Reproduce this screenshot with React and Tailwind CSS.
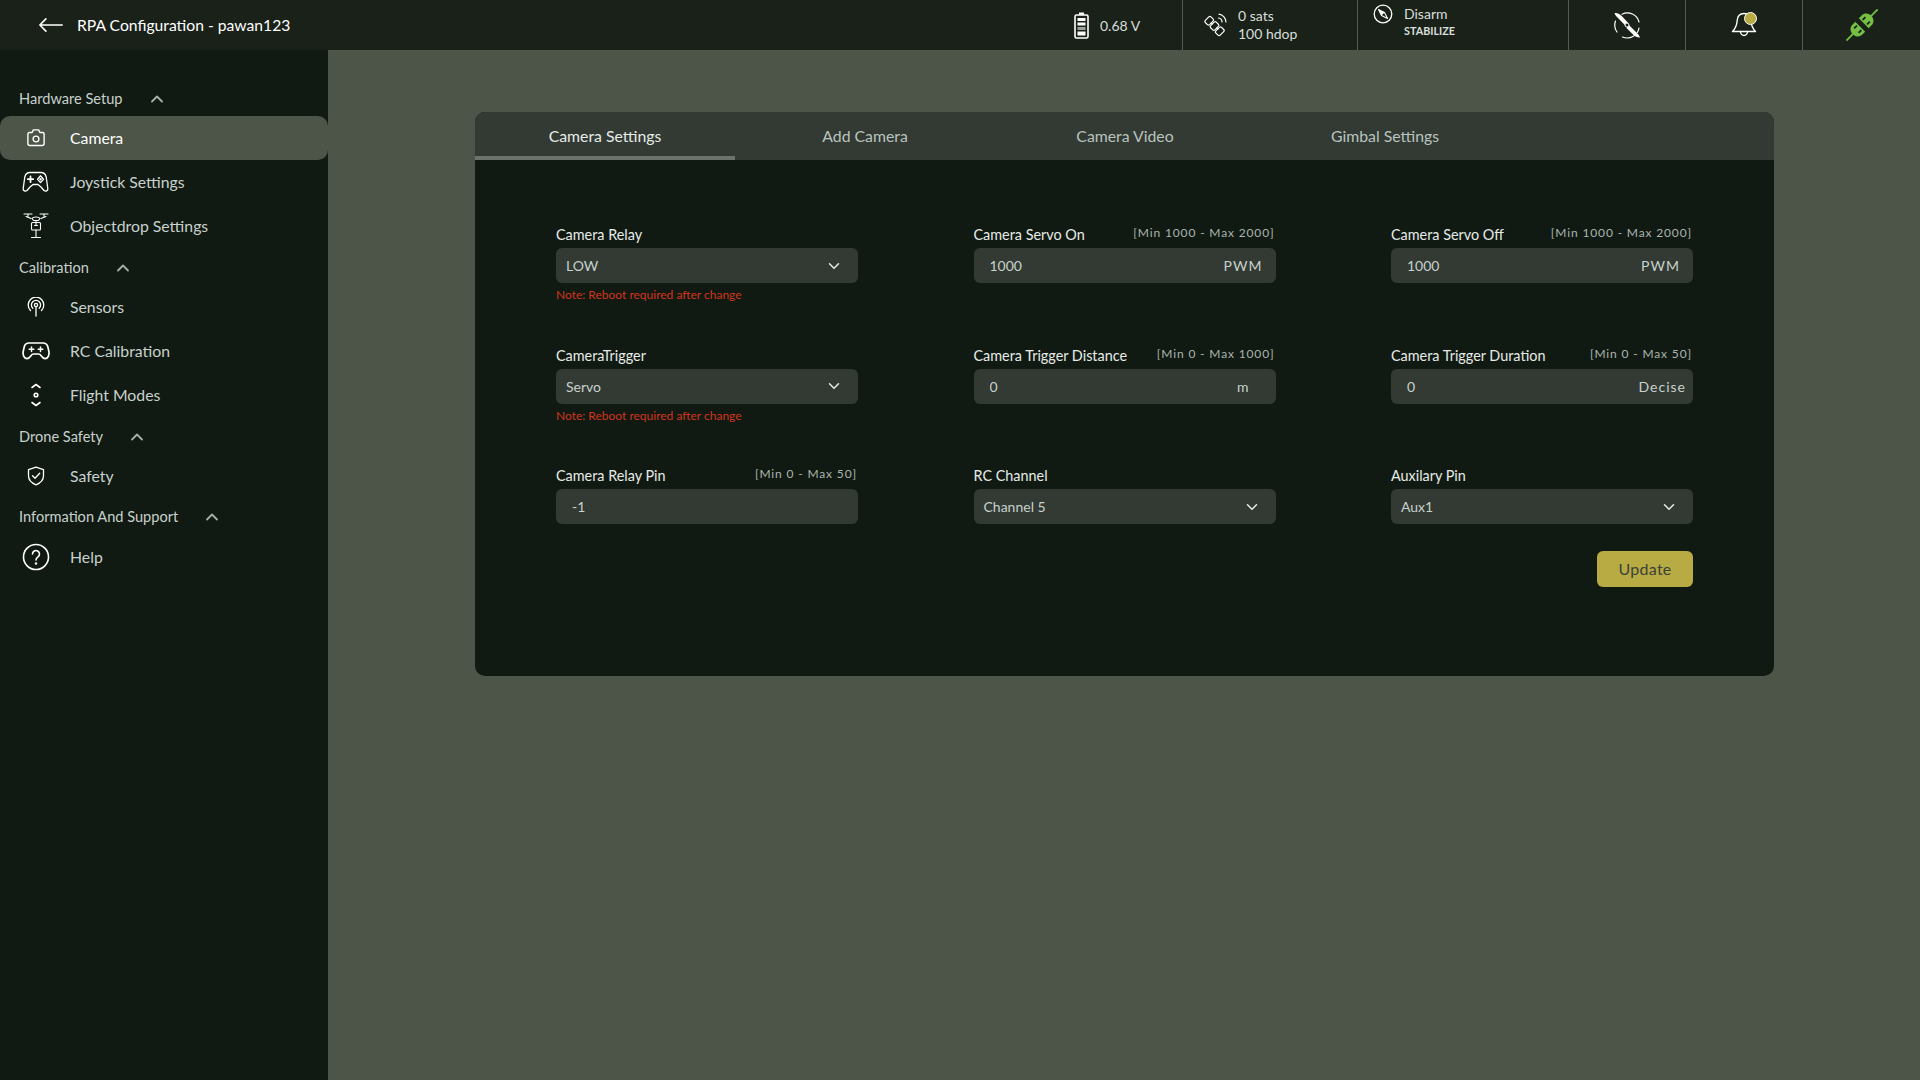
import { ChevronUp, ChevronDown } from 'lucide-react';

const Svg = ({ className, children, viewBox = '0 0 24 24', sw = 1.6 }) => (
   <svg viewBox={viewBox} fill="none" stroke="currentColor" strokeWidth={sw} strokeLinecap="round" strokeLinejoin="round" className={className}>
      {children}
   </svg>
);

const CameraIcon = () => (
   <Svg className="w-[20px] h-[20px] text-white" viewBox="0 0 20 20" sw={1.4}>
      <path d="M3.5 4.5h2.6l1.3-2.6h5.2l1.3 2.6h2.6a1.6 1.6 0 0 1 1.6 1.6v9.4a2 2 0 0 1-2 2H3.9a2 2 0 0 1-2-2V6.1a1.6 1.6 0 0 1 1.6-1.6z" />
      <circle cx="10" cy="11" r="2.9" />
   </Svg>
);

const JoystickIcon = () => (
   <Svg className="w-[27px] h-[22px] text-white" viewBox="0 0 27 22" sw={1.3}>
      <path d="M8 1.500h11c3 0 4.500 1.500 5.200 4.500l1.600 11.500c.3 2.500-2.200 3.300-3.800 2L19 16l-3-2.500H11L8 16l-3 3.500c-1.600 1.300-4.100.5-3.800-2L2.800 6C3.500 3 5 1.500 8 1.500z" />
      <path d="M8.500 5.500v5.500M5.800 8.200h5.400" strokeWidth="1.800" />
      <path d="M18.500 4.800l3 3.400-3 3.400-3-3.400z" strokeWidth="1.300" />
      <circle cx="18.500" cy="8.200" r=".6" />
   </Svg>
);

const DroneIcon = () => (
   <Svg className="w-[26px] h-[28px] text-white" viewBox="0 0 26 28" sw={1.1}>
      <path d="M1 2h8M17 2h8M5 2v2.500M21 2v2.500M3 4.500l5 2M23 4.500l-5 2" />
      <path d="M9 6.500c1-2 7-2 8 0l-1.500 2h-5z" />
      <rect x="8.500" y="10.500" width="9" height="7.500" rx="1" />
      <path d="M13 8.500v5M11.500 13.500h3M13 18v7M8.500 25.500h9" />
   </Svg>
);

const SensorIcon = () => (
   <Svg className="w-[20px] h-[20px] text-white" viewBox="0 0 20 20" sw={1.3}>
      <circle cx="10" cy="8" r="1.600" />
      <path d="M10 9.600V19M6.800 11.300a4.600 4.600 0 1 1 6.400 0M4.500 13.500a7.800 7.800 0 1 1 11 0" />
   </Svg>
);

const RcIcon = () => (
   <Svg className="w-[28px] h-[20px] text-white" viewBox="0 0 28 20" sw={1.7}>
      <path d="M7 2h14c2.600 0 4 1.300 4.800 3.600l1 4.400c.9 4-1 7.600-3.600 7.600-1.800 0-3-1.400-4.300-3.200-.6-.9-1.300-1.400-2.400-1.400h-4.900c-1.100 0-1.800.5-2.400 1.400-1.300 1.800-2.500 3.200-4.300 3.200-2.600 0-4.500-3.600-3.600-7.600l1-4.400C3 3.300 4.400 2 7 2z" />
      <path d="M9.500 6v4.500M7.200 8.200h4.600M18.500 6v4.500M16.200 8.200h4.600" strokeWidth="1.500" />
   </Svg>
);

const FlightIcon = () => (
   <Svg className="w-[14px] h-[24px] text-white" viewBox="0 0 14 24" sw={1.600}>
      <path d="M3 4.500L7 1.500l4 3M3 19.500l4 3 4-3" />
      <circle cx="7" cy="12" r="1.800" />
   </Svg>
);

const ShieldIcon = () => (
   <Svg className="w-[18px] h-[20px] text-white" viewBox="0 0 18 20" sw={1.300}>
      <path d="M9 1.200L16.500 3.600v6.200c0 4.400-3.300 7.400-7.500 9-4.200-1.600-7.500-4.600-7.500-9V3.600z" />
      <path d="M5.500 9.800l2.500 2.500 4.700-5" />
   </Svg>
);

const HelpIcon = () => (
   <Svg className="w-[28px] h-[28px] text-white" viewBox="0 0 28 28" sw={1.600}>
      <circle cx="14" cy="14" r="12.500" />
      <path d="M10.500 11a3.500 3.500 0 1 1 5.500 2.900c-1.300.9-2 1.600-2 3.100" />
      <circle cx="14" cy="20.500" r=".5" />
   </Svg>
);

const BatteryIcon = () => (
   <svg viewBox="0 0 15 27" className="w-[15px] h-[27px]">
      <rect x="5" y="0.500" width="5" height="2.500" fill="#fff" />
      <rect x="1" y="3" width="13" height="23" rx="1.500" fill="none" stroke="#fff" strokeWidth="1.600" />
      <rect x="3.500" y="6" width="8" height="3" fill="#fff" />
      <rect x="3.500" y="10.500" width="8" height="3" fill="#fff" />
      <rect x="3.500" y="15" width="8" height="3" fill="#9aa09a" />
      <rect x="3.500" y="19.500" width="8" height="4" fill="#fff" />
   </svg>
);

const SatelliteIcon = () => (
   <Svg className="w-[24px] h-[24px] text-white" viewBox="0 0 24 24" sw={1.200}>
      <g transform="rotate(-45 11.500 13)">
         <rect x="7.500" y="2.500" width="8" height="6" rx="1.500" />
         <rect x="7.500" y="10" width="8" height="6" rx="1.500" />
         <rect x="7.500" y="17.500" width="8" height="6" rx="1.500" />
         <path d="M11.500 8.500V10M11.500 16v1.500" />
      </g>
      <path d="M15.500 5a4 4 0 0 1 3.500 4M16 1.200a8 8 0 0 1 7 7.800" />
   </Svg>
);

const CompassIcon = () => (
   <svg viewBox="0 0 20 20" className="w-[20px] h-[20px]">
      <circle cx="10" cy="10" r="8.800" fill="none" stroke="#fff" strokeWidth="1.300" />
      <path d="M5.500 5.500L11.500 8.500L14.500 14.500L8.500 11.500z" fill="none" stroke="#fff" strokeWidth="1.100" strokeLinejoin="round" />
      <path d="M5.500 5.500L11.500 8.500L8.500 11.500z" fill="#fff" />
   </svg>
);

const PropIcon = () => (
   <svg viewBox="0 0 28 28" className="w-[28px] h-[28px]">
      <path d="M9 3.200A12 12 0 0 1 26 11M26 17a12 12 0 0 1-16.500 9M4 21A12 12 0 0 1 2.500 10" fill="none" stroke="#fff" strokeWidth="1.200" strokeLinecap="round" />
      <path d="M1.500 2c2.500-.5 5 .8 7 2.800l6.500 7-2.700 2.700L6 8C4 6 2.200 4.500 1.500 2zM27 26.500c-2.500.2-5-1-7-3L13.500 17l2.700-2.700 6.500 6.500c2 2 3.600 3.600 4.300 5.700z" fill="#fff" />
      <circle cx="14" cy="14" r="2" fill="#1a2119" stroke="#fff" strokeWidth="1" />
   </svg>
);

const BellIcon = () => (
   <div className="relative w-[26px] h-[26px]">
      <Svg className="w-[26px] h-[26px] text-white" viewBox="0 0 26 26" sw={1.400}>
         <path d="M13 1.500c-4.300 0-6.500 3-6.800 7-.3 4-1.300 7.500-4.700 11h23c-3.400-3.500-4.400-7-4.700-11-.3-4-2.500-7-6.800-7z" />
         <path d="M9.500 19.500a3.500 4 0 0 0 7 0" />
      </Svg>
      <div className="absolute top-0 right-0 w-[13px] h-[13px] rounded-full bg-[#b8ab44] border-[1.5px] border-white"></div>
   </div>
);

const PlugIcon = () => (
   <svg viewBox="0 0 32 32" className="w-[32px] h-[32px]">
      <g transform="rotate(45 16 16)">
         <path d="M9 13.500V9.500c0-4 3-6.500 7-6.500s7 2.500 7 6.500v4z" fill="#74bf44" />
         <rect x="15.100" y="-6" width="1.800" height="10" fill="#74bf44" />
         <rect x="12" y="8" width="1.800" height="4" fill="#1a2119" />
         <rect x="18.200" y="8" width="1.800" height="4" fill="#1a2119" />
         <path d="M9 18.500v4c0 4 3 6.500 7 6.500s7-2.500 7-6.500v-4z" fill="#74bf44" />
         <rect x="15.100" y="28" width="1.800" height="10" fill="#74bf44" />
         <rect x="12" y="20" width="1.800" height="4" fill="#1a2119" />
         <rect x="18.200" y="20" width="1.800" height="4" fill="#1a2119" />
      </g>
   </svg>
);

const menu = [
   { title: 'Hardware Setup', headClass: 'h-[36px] mt-[2px]', items: [
      { label: 'Camera', icon: <CameraIcon />, active: true, h: 'h-[44px]' },
      { label: 'Joystick Settings', icon: <JoystickIcon />, h: 'h-[44px]' },
      { label: 'Objectdrop Settings', icon: <DroneIcon />, h: 'h-[44px]' },
   ]},
   { title: 'Calibration', headClass: 'h-[37px]', items: [
      { label: 'Sensors', icon: <SensorIcon />, h: 'h-[44px]' },
      { label: 'RC Calibration', icon: <RcIcon />, h: 'h-[44px]' },
      { label: 'Flight Modes', icon: <FlightIcon />, h: 'h-[44px]' },
   ]},
   { title: 'Drone Safety', headClass: 'h-[38px]', items: [
      { label: 'Safety', icon: <ShieldIcon />, h: 'h-[42px]' },
   ]},
   { title: 'Information And Support', headClass: 'h-[38px]', items: [
      { label: 'Help', icon: <HelpIcon />, h: 'h-[44px]' },
   ]},
];

function Sidebar() {
   return (
      <aside className="w-[328px] shrink-0 bg-[#111a12] pt-[28px]">
         {menu.map((section) => (
            <div key={section.title}>
               <div className={`${section.headClass} flex items-center pl-[19px] pt-[2px] gap-[24px] text-[14.6px] text-[#c7d1cd]`}>
                  <span>{section.title}</span>
                  <ChevronUp className="w-[20px] h-[20px] text-[#a9aeaa]" strokeWidth={2.2} />
               </div>
               {section.items.map((item) => (
                  <div
                     key={item.label}
                     className={`flex items-center text-[15.8px] ${item.h} ${item.active ? 'bg-[#4c5548] rounded-[10px] text-white' : 'text-[#c7d1cd]'}`}
                  >
                     <div className="w-[70px] pl-[2px] pr-[1px] flex justify-center shrink-0">{item.icon}</div>
                     <span>{item.label}</span>
                  </div>
               ))}
            </div>
         ))}
      </aside>
   );
}

function Header() {
   return (
      <header className="h-[50px] bg-[#1a2119] flex items-center text-[#d7dedb] shrink-0">
         <div className="flex-1 flex items-center pl-[38px] gap-[13px]">
            <svg viewBox="0 0 28 16" className="w-[26px] h-[16px]" fill="none" stroke="#fff" strokeWidth="1.800" strokeLinecap="round" strokeLinejoin="round">
               <path d="M26 8H2M8.500 1.500L2 8l6.500 6.500" />
            </svg>
            <span className="text-[15.7px] text-white pt-[2px]">RPA Configuration - pawan123</span>
         </div>
         <div className="flex items-center gap-[11px] text-[14px] w-[108px] shrink-0">
            <BatteryIcon />
            <span>0.68 V</span>
         </div>
         <div className="h-full w-[175px] shrink-0 border-l border-[#555a55] flex items-center pl-[20px] gap-[11px] text-[14px]">
            <SatelliteIcon />
            <div className="leading-[18px]">
               <div>0 sats</div>
               <div>100 hdop</div>
            </div>
         </div>
         <div className="h-full w-[211px] shrink-0 border-l border-[#555a55] flex items-start pl-[15px] pt-[4px] gap-[11px]">
            <CompassIcon />
            <div className="pt-[1px]">
               <div className="text-[14px] leading-[18px]">Disarm</div>
               <div className="text-[10.8px] font-bold leading-[16px]">STABILIZE</div>
            </div>
         </div>
         <div className="h-full w-[117px] shrink-0 border-l border-[#555a55] flex items-center justify-center"><PropIcon /></div>
         <div className="h-full w-[117px] shrink-0 border-l border-[#555a55] flex items-center justify-center"><BellIcon /></div>
         <div className="h-full w-[118px] shrink-0 border-l border-[#555a55] flex items-center justify-center"><PlugIcon /></div>
      </header>
   );
}

function Label({ text, range }) {
   return (
      <div className="h-[23px] flex justify-between items-start text-[14.4px] leading-[20px] text-[#e6ebe8]">
         <span>{text}</span>
         {range && <span className="text-[12px] tracking-[0.85px] text-[#a9b5b0] leading-[16px] pr-[1px]">{range}</span>}
      </div>
   );
}

function SelectField({ label, value, note }) {
   return (
      <div>
         <Label text={label} />
         <div className="h-[35px] rounded-[6px] bg-[#323a33] flex items-center justify-between pl-[10px] pr-[15px] text-[14px] text-[#c7d1cd]">
            <span>{value}</span>
            <ChevronDown className="w-[18px] h-[18px] text-[#e6ebe8]" strokeWidth={2} />
         </div>
         {note && <p className="mt-[2px] h-[18px] text-[12px] leading-[20px] text-[#d1351c]">Note: Reboot required after change</p>}
      </div>
   );
}

function InputField({ label, range, value, unit, unitClass = 'pr-[13px]' }) {
   return (
      <div>
         <Label text={label} range={range} />
         <div className="h-[35px] rounded-[6px] bg-[#323a33] flex items-center justify-between pl-[16px] text-[14px] text-[#c7d1cd]">
            <input readOnly value={value} className="bg-transparent outline-none w-[120px]" />
            {unit && <span className={`tracking-[1px] ${unitClass}`}>{unit}</span>}
         </div>
      </div>
   );
}

const tabs = ['Camera Settings', 'Add Camera', 'Camera Video', 'Gimbal Settings'];

export default function App() {
   return (
      <div className="w-full h-screen flex flex-col bg-[#4c5548] font-['Lato','Open_Sans',sans-serif] overflow-hidden">
         <Header />
         <div className="flex flex-1 min-h-0">
            <Sidebar />
            <main className="flex-1 pt-[62px] pl-[147px] pr-[146px]">
               <div className="rounded-[10px] bg-[#111a12] overflow-hidden">
                  <div className="h-[48px] bg-[#323a33] flex">
                     {tabs.map((tab, i) => (
                        <div
                           key={tab}
                           className={`w-[260px] h-full flex items-center justify-center pt-[4px] text-[15.8px] border-b-4 ${i === 0 ? 'border-[#6c736c] text-[#e6ebe8]' : 'border-transparent text-[#b9c3bf]'}`}
                        >
                           {tab}
                        </div>
                     ))}
                  </div>
                  <div className="pt-[65px] pl-[81px] pr-[81px] pb-[89px]">
                     <div className="grid grid-cols-3 gap-x-[115.5px] gap-y-[42.5px]">
                        <SelectField label="Camera Relay" value="LOW" note />
                        <InputField label="Camera Servo On" range="[Min 1000 - Max 2000]" value="1000" unit="PWM" />
                        <InputField label="Camera Servo Off" range="[Min 1000 - Max 2000]" value="1000" unit="PWM" />
                        <SelectField label="CameraTrigger" value="Servo" note />
                        <InputField label="Camera Trigger Distance" range="[Min 0 - Max 1000]" value="0" unit="m" unitClass="pr-[26px]" />
                        <InputField label="Camera Trigger Duration" range="[Min 0 - Max 50]" value="0" unit="Decise" unitClass="pr-[7px]" />
                        <InputField label="Camera Relay Pin" range="[Min 0 - Max 50]" value="-1" />
                        <SelectField label="RC Channel" value="Channel 5" />
                        <SelectField label="Auxilary Pin" value="Aux1" />
                     </div>
                     <div className="mt-[27px] flex justify-end">
                        <button className="w-[96px] h-[36px] rounded-[6px] bg-[#b8ab44] text-[16px] text-[#3b4238] tracking-[0.3px]">Update</button>
                     </div>
                  </div>
               </div>
            </main>
         </div>
      </div>
   );
}
